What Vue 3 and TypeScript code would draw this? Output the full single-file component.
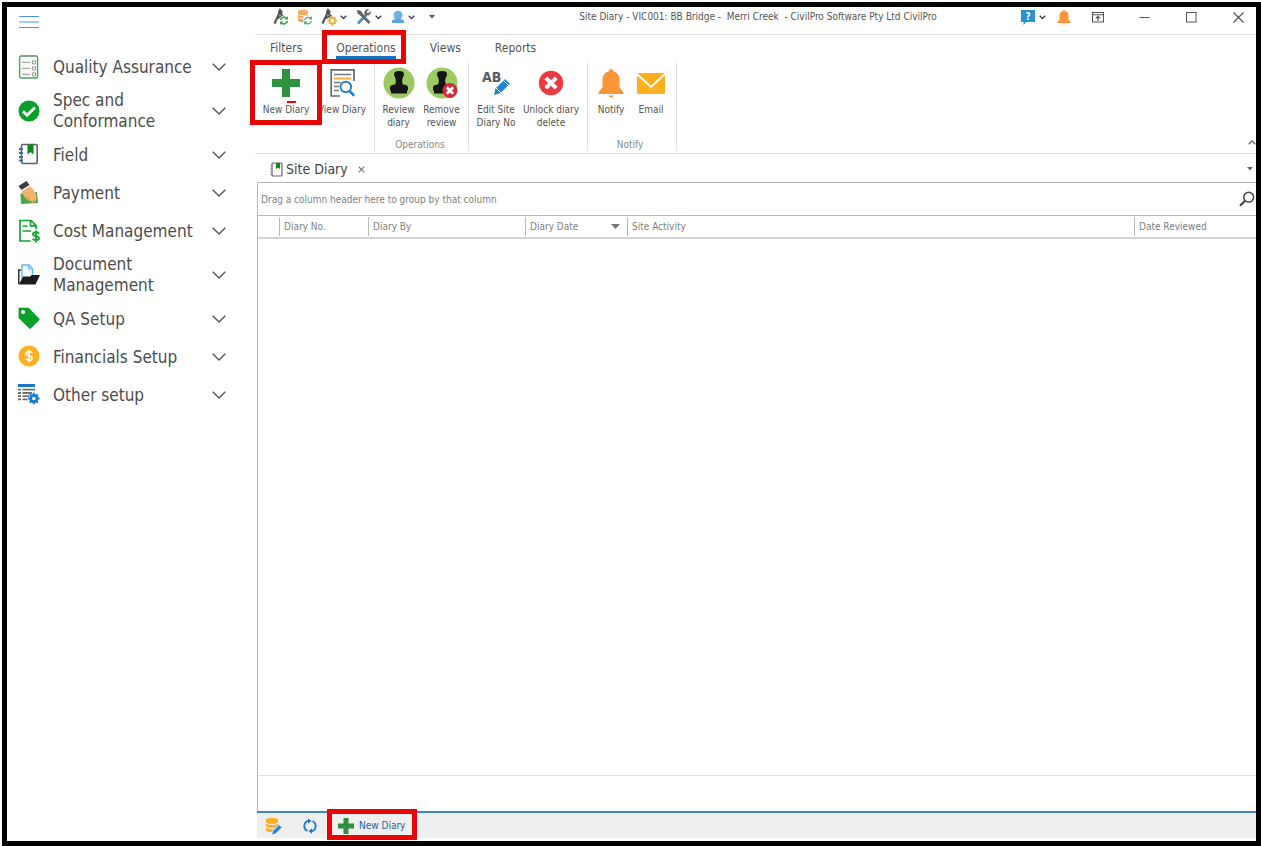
<script setup lang="ts">
interface NavItem { id: string; label: string }
interface Column { id: string; label: string; sorted?: boolean }

const navItems: NavItem[] = [
  { id: 'quality', label: 'Quality Assurance' },
  { id: 'spec', label: 'Spec and Conformance' },
  { id: 'field', label: 'Field' },
  { id: 'payment', label: 'Payment' },
  { id: 'cost', label: 'Cost Management' },
  { id: 'document', label: 'Document Management' },
  { id: 'qasetup', label: 'QA Setup' },
  { id: 'financials', label: 'Financials Setup' },
  { id: 'other', label: 'Other setup' },
]

const ribbonTabs = ['Filters', 'Operations', 'Views', 'Reports']
const activeTab = 'Operations'
const title = 'Site Diary - VIC001: BB Bridge -  Merri Creek  - CivilPro Software Pty Ltd CivilPro'

const columns: Column[] = [
  { id: 'mark', label: '' },
  { id: 'no', label: 'Diary No.' },
  { id: 'by', label: 'Diary By' },
  { id: 'date', label: 'Diary Date', sorted: true },
  { id: 'activity', label: 'Site Activity' },
  { id: 'reviewed', label: 'Date Reviewed' },
]
</script>

<template>
  <div class="desk">
    <div class="window">
      <aside class="sidebar">
        <button class="menu" aria-label="Menu">
          <svg width="22" height="14" viewBox="0 0 22 14"><path d="M1 1.5h20M1 7h20M1 12.5h20" stroke="#4a97d6" stroke-width="1.2" /></svg>
        </button>
        <nav>
          <button v-for="item in navItems" :key="item.id" class="nav-item">
            <svg v-if="item.id === 'quality'" class="nav-icon" viewBox="0 0 22 24">
              <rect x="1.6" y="1" width="18" height="22" rx="1.5" fill="#f7faf7" stroke="#4fa564" stroke-width="1.4" />
              <path d="M2.5 .9h16" stroke="#8b9a8e" stroke-width="1.2" />
              <path d="M4 7.4h8M4 13.4h8M4 19.4h8" stroke="#aaa" stroke-width="1.3" />
              <path d="M14.5 5.9h3v3h-3zM14.5 11.9h3v3h-3zM14.5 17.9h3v3h-3z" fill="#fff" stroke="#999" />
            </svg>
            <svg v-else-if="item.id === 'spec'" class="nav-icon" viewBox="0 0 22 24">
              <circle cx="11" cy="12" r="10.5" fill="#0a9f28" /><path d="M5 12.3l4.1 4L17 8.6" fill="none" stroke="#fff" stroke-width="2.8" />
            </svg>
            <svg v-else-if="item.id === 'field'" class="nav-icon" viewBox="0 0 22 24">
              <rect x="3.5" y="1.5" width="15.7" height="19" rx="1.4" fill="#f8f8f8" stroke="#626262" stroke-width="1.6" />
              <path d="M9.5 1.500h6v10l-3-2.600-3 2.600z" fill="#078a13" />
              <path d="M1 6h4M1 10h4M1 14h4M1 17.5h4" stroke="#3f6f96" stroke-width="1.8" />
            </svg>
            <svg v-else-if="item.id === 'payment'" class="nav-icon" viewBox="0 0 22 24">
              <path d="M2.500 12.500l16.500-1.500 1 11-17 1z" fill="#43a949" />
              <path d="M4 8l7-4 4 4 3.500 6-.5 6-3 2-7-4-4-6z" fill="#f5b26a" />
              <path d="M8 16l6 5 3-2" fill="none" stroke="#d98c41" />
              <path d="M.5 5L8.500 0l3 4-8 5z" fill="#383c43" /><path d="M3.500 9l8-5 1 1-8 5z" fill="#eee" />
            </svg>
            <svg v-else-if="item.id === 'cost'" class="nav-icon" viewBox="0 0 22 24">
              <path d="M12.5 22H2V1.5h11l5 5.2V10M12.5 1.5v5.3H18" fill="none" stroke="#0fa52f" stroke-width="1.7" />
              <path d="M4.5 7h5M4.5 12h8.500" stroke="#0fa52f" stroke-width="1.7" />
              <path d="M21 14.4c-1-1.7-6-1.6-6 .8 0 2.7 6 1.2 6 4 0 2.4-5 2.4-6.4.5M18 11.6v11.8" fill="none" stroke="#0fa52f" stroke-width="1.9" />
            </svg>
            <svg v-else-if="item.id === 'document'" class="nav-icon" viewBox="0 0 22 24">
              <path d="M4 18V2h7l3.500 3.600V15" fill="#f3faff" stroke="#65b5ed" stroke-width="1.4" /><path d="M10.700 2v4h4" fill="none" stroke="#65b5ed" stroke-width="1.2" />
              <path d="M.8 21V7h2" fill="none" stroke="#222" stroke-width="1.4" /><path d="M.8 21.5l4.400-8h7l1.500-1.500H22l-4.500 9.500z" fill="#1c1c1c" />
            </svg>
            <svg v-else-if="item.id === 'qasetup'" class="nav-icon" viewBox="0 0 22 24">
              <path d="M.6 1.8Q.6.8 1.6.8h9L21.2 11.500q.8.9 0 1.800l-8.200 8q-1 1-2 0L.6 11z" fill="#0a9f28" /><circle cx="5" cy="5" r="2.1" fill="#fff" />
            </svg>
            <svg v-else-if="item.id === 'financials'" class="nav-icon" viewBox="0 0 22 24">
              <circle cx="11" cy="11" r="10.5" fill="#fdb022" />
              <path d="M14 8c-.8-2.100-5.800-2-5.800.6 0 2.900 5.900 1.600 5.900 4.600 0 2.700-5 2.800-6.300.5M11 4.400v13.200" fill="none" stroke="#fff" stroke-width="1.6" />
            </svg>
            <svg v-else class="nav-icon" viewBox="0 0 22 24">
              <path d="M0 2.500h17" stroke="#1c76cf" stroke-width="3" />
              <path d="M0 6.700h3M4.500 6.700H17M0 10h3M4.500 10H14M0 13.200h3M4.500 13.200H11M0 16.400h3M4.500 16.400h5" stroke="#707070" stroke-width="1.8" />
              <circle cx="15.8" cy="15.500" r="3.200" fill="#fff" stroke="#167ad8" stroke-width="2.800" />
              <path d="M15.800 9.700v2M15.800 19.300v2M10 15.500h2M19.600 15.500h2M11.700 11.400l1.400 1.400M18.500 18.200l1.400 1.400M19.900 11.400l-1.400 1.400M13.100 18.200l-1.400 1.400" stroke="#167ad8" stroke-width="2" />
            </svg>
            <span class="nav-label">{{ item.label }}</span>
            <svg class="nav-chevron" width="14" height="8" viewBox="0 0 14 8"><path d="M.7.700L7 7 13.300.7" fill="none" stroke="#555" stroke-width="1.4" /></svg>
          </button>
        </nav>
      </aside>

      <main class="main">
        <header class="titlebar">
          <div class="quick">
            <button class="quick-btn" aria-label="Refresh project">
              <svg width="18" height="18" viewBox="0 0 18 18">
                <path d="M2.500 15.500L8 4l3 6M4 10.500l8-2.500" fill="none" stroke="#555" stroke-width="2.200" /><circle cx="8.300" cy="4" r="2.300" fill="#555" /><path d="M8 .5v2" stroke="#555" stroke-width="1.500" />
                <circle cx="12" cy="12.300" r="4.700" fill="#fff" /><path d="M8.600 12a3.400 3.400 0 0 1 6-1.600M15.400 13a3.400 3.400 0 0 1-6 1.600" fill="none" stroke="#35a852" stroke-width="1.7" /><path d="M16 8v3.500h-3.500zM8 17v-3.500h3.500z" fill="#35a852" />
              </svg>
            </button>
            <button class="quick-btn" aria-label="Refresh database">
              <svg width="18" height="18" viewBox="0 0 18 18">
                <path d="M2 3.500v9c0 2.400 10 2.400 10 0v-9z" fill="#f7a052" /><ellipse cx="7" cy="3.500" rx="5" ry="2" fill="#f9ab62" /><path d="M2 6c1 2 9 2 10 0M2 9c1 2 9 2 10 0" fill="none" stroke="#fff" />
                <rect x="7.500" y="8" width="9" height="9" fill="#fff" /><path d="M8.800 12a3.400 3.400 0 0 1 5.800-1.600M15.400 13a3.400 3.400 0 0 1-6 1.600" fill="none" stroke="#59ab74" stroke-width="1.3" /><path d="M16 8v3.500h-3.500zM8 17v-3.500h3.500z" fill="#59ab74" />
              </svg>
            </button>
            <button class="quick-btn with-arrow" aria-label="Project settings">
              <svg width="18" height="18" viewBox="0 0 18 18">
                <path d="M2.500 15.500L8 4l3 6M4 10.500l8-2.500" fill="none" stroke="#555" stroke-width="2.200" /><circle cx="8.300" cy="4" r="2.300" fill="#555" /><path d="M8 .5v2" stroke="#555" stroke-width="1.500" />
                <circle cx="12.300" cy="12.700" r="4.500" fill="#fff" /><circle cx="12.300" cy="12.700" r="2.800" fill="#fff" stroke="#f2b13c" stroke-width="1.8" /><path d="M12.300 8v2M12.300 15.700v2M7.600 12.700h2M15.200 12.700h2M9 9.400l1 1M15.600 9.400l-1 1M9 16l1-1M15.600 16l-1-1" stroke="#f2b13c" stroke-width="1.6" />
              </svg>
              <svg width="7" height="5" viewBox="0 0 7 5"><path d="M.7.800l2.800 2.700L6.300.8" fill="none" stroke="#444" stroke-width="1.4" /></svg>
            </button>
            <button class="quick-btn with-arrow" aria-label="Tools">
              <svg width="18" height="18" viewBox="0 0 18 18">
                <path d="M3 15.500l8-8.500" stroke="#4a94c7" stroke-width="2.800" />
                <path d="M5 5l9.500 10" stroke="#666" stroke-width="2.600" /><path d="M2 2l3.500.5L8 6 6 8 2.500 5.500z" fill="#666" />
                <path d="M15.500 3L13 5.500 11.600 4l2.500-2.600C10 0 8.400 5 10 7c3 1.600 7-.8 5.500-4z" fill="#666" />
              </svg>
              <svg width="7" height="5" viewBox="0 0 7 5"><path d="M.7.800l2.800 2.700L6.300.8" fill="none" stroke="#444" stroke-width="1.4" /></svg>
            </button>
            <button class="quick-btn with-arrow" aria-label="User">
              <svg width="16" height="18" viewBox="1 0 16 18"><circle cx="9" cy="7.300" r="4.500" fill="#6bb1e4" /><path d="M3 15v-2q0-1 1.500-1.200L7 11h4l2.500.8Q15 12 15 13v2z" fill="#57a5df" /></svg>
              <svg width="7" height="5" viewBox="0 0 7 5"><path d="M.7.800l2.800 2.700L6.300.8" fill="none" stroke="#444" stroke-width="1.4" /></svg>
            </button>
            <button class="customise" aria-label="Customise toolbar"><svg width="6" height="4" viewBox="0 0 6 4"><path d="M0 0h6L3 3.500z" fill="#555" /></svg></button>
          </div>
          <h1 class="title">{{ title }}</h1>
          <div class="system">
            <button class="help" aria-label="Help">
              <svg width="16" height="16" viewBox="0 0 16 16"><path d="M1 1h14v12H6l-2.500 3V13H1z" fill="#2b8fd4" /><text x="8" y="11" text-anchor="middle" class="glyph">?</text></svg>
              <svg width="7" height="5" viewBox="0 0 7 5"><path d="M.7.800l2.800 2.700L6.300.8" fill="none" stroke="#444" stroke-width="1.4" /></svg>
            </button>
            <button class="alerts" aria-label="Notifications"><svg width="14" height="16" viewBox="0 0 28 30"><path d="M14 1q2 0 2.500 2.500Q23 5 23 12v8l4 5v2H1v-2l4-5v-8Q5 5 11.500 3.500 12 1 14 1zM11.500 28h5q-.5 2-2.500 2t-2.500-2z" fill="#fb9638" /></svg></button>
            <button class="ribbon-mode" aria-label="Ribbon display"><svg width="12" height="11" viewBox="0 0 12 11"><path d="M.5.500h11v9.500H.5zM.5 2.700h11M6 9V4.500M3.800 6.300L6 4.200l2.200 2.100" fill="none" stroke="#555" stroke-width="1.1" /></svg></button>
            <button class="sys-btn" aria-label="Minimize"><svg width="11" height="11" viewBox="0 0 11 11"><path d="M.5 5.500h10" stroke="#555" /></svg></button>
            <button class="sys-btn" aria-label="Maximize"><svg width="11" height="11" viewBox="0 0 11 11"><rect x=".5" y=".5" width="9.500" height="9.500" fill="none" stroke="#555" /></svg></button>
            <button class="sys-btn" aria-label="Close"><svg width="11" height="11" viewBox="0 0 11 11"><path d="M.5.500l10 10M10.500.5l-10 10" stroke="#555" stroke-width="1.2" /></svg></button>
          </div>
        </header>

        <div class="tabs" role="tablist">
          <button v-for="tab in ribbonTabs" :key="tab" class="tab" :class="{ active: tab === activeTab }" role="tab" :aria-selected="tab === activeTab">
            {{ tab }}<span v-if="tab === activeTab" class="mark mark-tab"></span>
          </button>
        </div>

        <section class="ribbon">
          <div class="group records">
            <div class="tools">
              <button class="tool new">
                <svg width="32" height="32" viewBox="0 0 32 32"><path d="M12 2h8v10h10v8H20v10h-8V20H2v-8h10z" fill="#2d9140" /></svg>
                <span>New Diary</span>
                <i class="dash"></i><span class="mark mark-new"></span>
              </button>
              <button class="tool view">
                <svg width="32" height="32" viewBox="0 0 32 32">
                  <path d="M28 14V2.800H5.200V29H14" fill="none" stroke="#686868" stroke-width="1.7" /><path d="M8 7.500h17M8 15.500h7M8 19.500h5M8 23.500h5" stroke="#777" stroke-width="1.7" /><path d="M8 11.500h17" stroke="#fbb040" stroke-width="2.2" />
                  <circle cx="19.800" cy="20" r="5.300" fill="#fff" stroke="#2782cc" stroke-width="1.9" /><path d="M23.600 24l4.600 4.800" stroke="#2782cc" stroke-width="2.6" />
                </svg>
                <span>View Diary</span>
              </button>
            </div>
          </div>
          <div class="group review">
            <div class="tools">
              <button v-for="kind in ['Review diary', 'Remove review']" :key="kind" class="tool stamp">
                <svg width="32" height="32" viewBox="0 0 32 32">
                  <circle cx="16" cy="16" r="15.500" fill="#9aca60" />
                  <path d="M11 7q0-3 5-3t5 3q0 2-1.400 4-1.100 3 .2 6.500 4.700.2 5.200 2.500v3.500H7V20q.5-2.300 5.200-2.500 1.300-3.500.2-6.500Q11 9 11 7z" fill="#151515" /><path d="M8 23h16v3.500H8z" fill="#151515" />
                  <g v-if="kind === 'Remove review'"><circle cx="24" cy="23.500" r="7.500" fill="#d92635" /><path d="M20.800 20.300l6.400 6.400M27.200 20.300l-6.400 6.400" stroke="#fff" stroke-width="2.8" /></g>
                </svg>
                <span>{{ kind }}</span>
              </button>
            </div>
            <h2 class="group-name">Operations</h2>
          </div>
          <div class="group edit">
            <div class="tools">
              <button class="tool edit-no">
                <svg width="32" height="32" viewBox="0 0 32 32"><text x="2" y="15" class="ab">AB</text><path d="M15.500 21.500L25 12l4.800 4.800L20.300 26.300l-6.300 1.700z" fill="#2385ce" /><path d="M23.500 13.500l5 5M16 21l5 5" stroke="#fff" stroke-width="1" /></svg>
                <span>Edit Site Diary No</span>
              </button>
              <button class="tool unlock">
                <svg width="32" height="32" viewBox="0 0 32 32"><circle cx="16" cy="16" r="12.200" fill="#ee3940" /><path d="M10.800 10.800l10.400 10.400M21.200 10.800L10.800 21.200" stroke="#fff" stroke-width="4" /></svg>
                <span>Unlock diary delete</span>
              </button>
            </div>
          </div>
          <div class="group notify">
            <div class="tools">
              <button class="tool bell">
                <svg width="32" height="32" viewBox="0 0 32 32"><path d="M16 2q2 0 2.500 2.500Q24.500 6 24.500 13v7l4 5.500V27h-25v-1.500l4-5.500v-7q0-7 6-8.500Q14 2 16 2zM13.500 28.500h5q-.5 2-2.500 2t-2.500-2z" fill="#fb9638" /></svg>
                <span>Notify</span>
              </button>
              <button class="tool mail">
                <svg width="32" height="32" viewBox="0 0 32 32"><rect x="2" y="6" width="28" height="21" rx="1" fill="#ffae1d" /><path d="M2 7l14 13L30 7" fill="none" stroke="#fff" stroke-width="2" /></svg>
                <span>Email</span>
              </button>
            </div>
            <h2 class="group-name">Notify</h2>
          </div>
          <button class="collapse" aria-label="Collapse ribbon"><svg width="8" height="5" viewBox="0 0 8 5"><path d="M.7 4.300L4 1l3.300 3.300" fill="none" stroke="#666" stroke-width="1.3" /></svg></button>
        </section>

        <div class="documents">
          <div class="doc-tab">
            <svg width="13" height="15" viewBox="0 0 13 15"><rect x="2" y="1" width="10" height="13" rx="1" fill="#fff" stroke="#666" stroke-width="1.2" /><path d="M6 1h4v6L8 5.500 6 7z" fill="#078a13" /><path d="M.3 4h2M.3 7h2M.3 10h2M.3 12.500h2" stroke="#888" /></svg>
            <span>Site Diary</span>
            <button class="doc-close" aria-label="Close Site Diary"><svg width="7" height="7" viewBox="0 0 7 7"><path d="M.7.700l5.600 5.600M6.300.7L.7 6.300" stroke="#777" stroke-width="1.2" /></svg></button>
          </div>
          <button class="doc-list" aria-label="Open documents"><svg width="6" height="4" viewBox="0 0 6 4"><path d="M0 0h6L3 3.500z" fill="#666" /></svg></button>
        </div>

        <section class="grid">
          <div class="group-panel">
            <span>Drag a column header here to group by that column</span>
            <button aria-label="Search"><svg width="16" height="16" viewBox="0 0 16 16"><circle cx="9.700" cy="6.200" r="4.900" fill="none" stroke="#444" stroke-width="1.5" /><path d="M6 9.800L1 14.800" stroke="#444" stroke-width="2.2" /></svg></button>
          </div>
          <table>
            <colgroup><col v-for="col in columns" :key="col.id" :class="'col-' + col.id" /></colgroup>
            <thead>
              <tr>
                <th v-for="col in columns" :key="col.id" scope="col">
                  <div class="head"><span>{{ col.label }}</span><svg v-if="col.sorted" width="9" height="5" viewBox="0 0 9 5"><path d="M0 0h9L4.500 5z" fill="#777" /></svg></div>
                </th>
              </tr>
            </thead>
          </table>
          <div class="rows"></div>
          <div class="summary"></div>
        </section>

        <footer class="status">
          <button class="status-btn" aria-label="Edit data">
            <svg width="18" height="18" viewBox="0 0 18 18"><path d="M1 3v10c0 3 12 3 12 0V3z" fill="#fdb022" /><ellipse cx="7" cy="3" rx="6" ry="2.300" fill="#fdb022" /><path d="M1 5.500c1 2.500 11 2.500 12 0M1 9.500c1 2.500 11 2.500 12 0" fill="none" stroke="#efefef" stroke-width="1.2" /><path d="M7.500 14l6.500-6.500 3 3-6.500 6.500-4 1z" fill="#2385de" stroke="#efefef" /></svg>
          </button>
          <button class="status-btn" aria-label="Refresh">
            <svg width="16" height="16" viewBox="0 0 16 16"><path d="M5.500 13A5.500 5.500 0 0 1 6.500 2.700M10.500 3a5.500 5.500 0 0 1-1 10.300" fill="none" stroke="#1b7bdc" stroke-width="1.9" /><path d="M6 .200L9.500 3 6 5.700zM10 10.300v5.500L6.500 13z" fill="#1b7bdc" /></svg>
          </button>
          <button class="status-new">
            <svg width="18" height="18" viewBox="0 0 18 18"><path d="M6.500 1h5v5.500H17v5h-5.500V17h-5v-5.500H1v-5h5.500z" fill="#2d9140" /></svg>
            <span>New Diary</span><span class="mark mark-status"></span>
          </button>
        </footer>
      </main>
    </div>
  </div>
</template>

<style>
html, body { margin: 0; background: #fff; }
</style>

<style scoped>
* { box-sizing: border-box; }
.desk { min-height: 100vh; padding: 2px 0 0 2px; display: flex; font-family: Tahoma, "DejaVu Sans Condensed", "DejaVu Sans", sans-serif; font-size: 10px; color: #555; }
button { appearance: none; border: 0; background: none; padding: 0; margin: 0; font: inherit; color: inherit; display: flex; align-items: center; cursor: pointer; }
svg { display: block; flex: none; }
.window { flex: 1; min-width: 0; border: 5px solid #000; display: flex; background: #fff; }
.sidebar { width: 248px; flex: none; padding-top: 8px; }
.menu { margin-left: 11px; height: 14px; margin-bottom: 19px; }
.nav-item { width: 100%; min-height: 38px; padding: 4px 29px 4px 11px; text-align: left; font-size: 17px; line-height: 21px; color: #4d4d4d; }
.nav-icon { width: 22px; height: 24px; margin-right: 13px; }
.nav-label { flex: 1; padding-right: 9px; }
.main { flex: 1; min-width: 0; display: flex; flex-direction: column; }
.titlebar { height: 28px; flex: none; display: flex; align-items: center; border-bottom: 1px solid #e2e2e2; padding-bottom: 7px; }
.quick, .system { flex: 1; display: flex; align-items: center; }
.quick { padding-left: 17px; gap: 6px; }
.with-arrow { gap: 2px; margin-right: 2px; }
.customise { margin-left: 6px; }
.title { margin: 0; font-size: 10px; line-height: 14px; font-weight: 400; white-space: pre; }
.system { justify-content: flex-end; padding-right: 12px; }
.help { gap: 3px; margin-right: 11px; }
.alerts { margin-right: 21px; }
.ribbon-mode { margin-right: 35px; }
.sys-btn + .sys-btn { margin-left: 36px; }
.glyph { font-size: 10px; font-weight: 700; fill: #fff; }
.tabs { height: 27px; flex: none; display: flex; gap: 34px; padding: 3px 15px 0; font-size: 12px; }
.tab { position: relative; height: 21px; padding-top: 2px; border-bottom: 3px solid transparent; }
.tab.active { border-color: #1873bd; }
.mark { position: absolute; border: 5px solid #e90505; pointer-events: none; z-index: 2; }
.mark-tab { inset: -8px -10px -8px -14px; }
.ribbon { height: 92px; flex: none; display: flex; border-bottom: 1px solid #e2e2e2; padding-bottom: 2px; }
.group { border-right: 1px solid #e2e2e2; display: flex; flex-direction: column; justify-content: space-between; }
.tools { display: flex; padding-top: 5px; }
.tool { position: relative; flex-direction: column; line-height: 13px; text-align: center; }
.tool svg { margin-bottom: 4px; }
.records { padding: 0 4px 0 3px; }
.records .tool { width: 56px; white-space: nowrap; }
.review { padding: 0 5px 0 2px; }
.stamp { width: 43px; }
.edit { padding: 0 6px 0 2px; }
.edit-no { width: 50px; }
.unlock { width: 60px; }
.notify { padding: 0 6px 0 2px; }
.bell { width: 42px; }
.mail { width: 38px; }
.group-name { margin: 0; font-size: 10px; line-height: 13px; font-weight: 400; text-align: center; color: #888; }
.ab { font-size: 14px; font-weight: 700; fill: #5b5b5b; }
.mark-new { inset: -7px -8px -9px; }
.dash { position: absolute; left: 29px; top: 34px; width: 9px; height: 2px; background: #e90505; }
.collapse { margin-left: auto; align-self: flex-end; padding-bottom: 6px; }
.documents { height: 28px; flex: none; display: flex; align-items: center; justify-content: space-between; padding: 2px 3px 0 15px; }
.doc-tab { display: flex; align-items: center; gap: 3px; font-size: 14px; color: #444; }
.doc-close { margin-left: 7px; }
.grid { flex: 1; margin-left: 2px; border-left: 1px solid #b9b9b9; border-top: 1px solid #b9b9b9; display: flex; flex-direction: column; color: #808080; }
.group-panel { height: 33px; flex: none; display: flex; align-items: center; justify-content: space-between; padding: 0 1px 0 3px; border-bottom: 1px solid #b9b9b9; }
table { width: 100%; table-layout: fixed; border-collapse: collapse; }
.col-mark { width: 21px; }
.col-no { width: 89px; }
.col-by { width: 157px; }
.col-date { width: 102px; }
.col-reviewed { width: 122px; }
thead { border-bottom: 2px solid #d3d3d3; }
th { padding: 1px 0; font-weight: 400; text-align: left; }
.head { height: 19px; padding: 0 7px 0 4px; display: flex; align-items: center; justify-content: space-between; }
th + th .head { border-left: 1px solid #bbb; }
.rows { flex: 1; }
.summary { height: 36px; border-top: 1px solid #e0e0e0; }
.status { height: 27px; flex: none; margin: 0 0 3px 2px; border-top: 2px solid #3f84c6; background: #efefef; display: flex; align-items: center; padding-left: 8px; gap: 19px; }
.status-new { position: relative; gap: 4px; color: #2464a4; height: 21px; }
.mark-status { inset: -6px -12px -4px -10px; }
</style>
